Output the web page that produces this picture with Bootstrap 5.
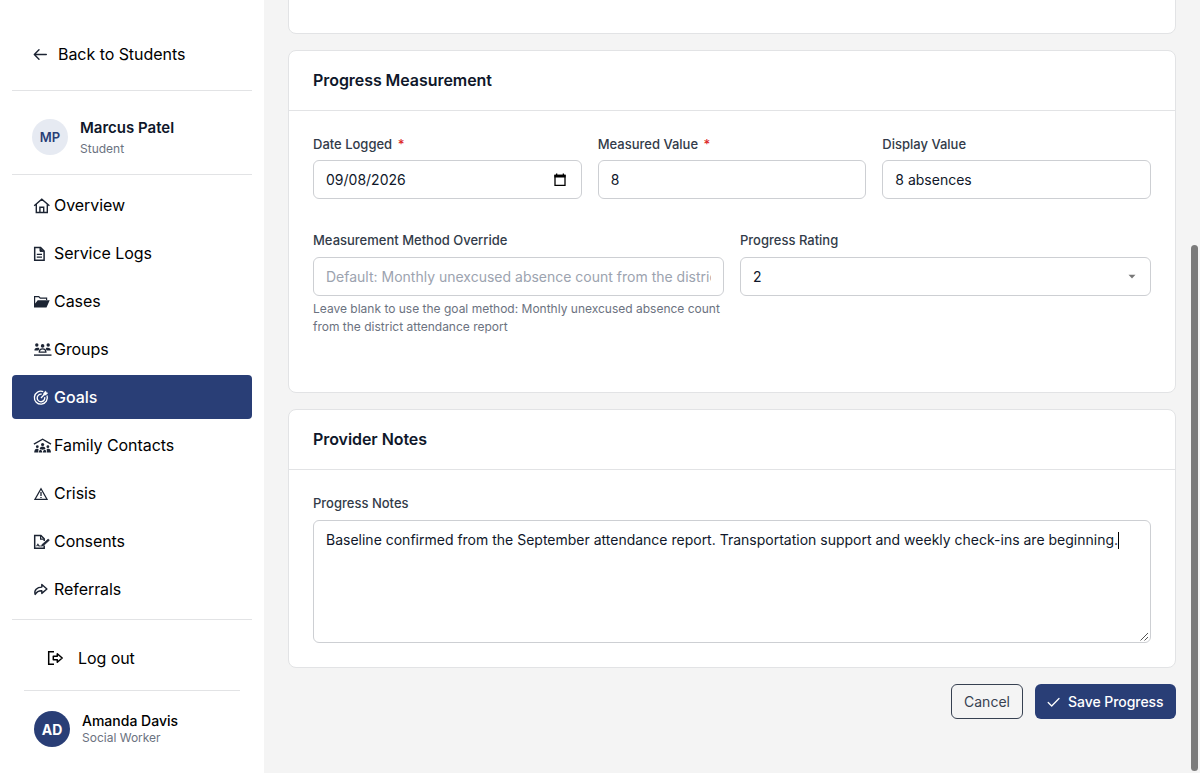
<!DOCTYPE html>
<html lang="en">
<head>
<meta charset="utf-8">
<meta name="viewport" content="width=device-width, initial-scale=1">
<title>Log Progress</title>
<link href="https://cdn.jsdelivr.net/npm/bootstrap@5.3.0/dist/css/bootstrap.min.css" rel="stylesheet">
<style>
:root{--navy:#293e76;--line:#e2e3e5;--ink:#0f172a;--slate:#6b7280}
body{font-family:Inter,sans-serif;font-size:14px;color:#000;background:#f4f4f4;height:100vh;overflow:hidden}
.side-panel{width:264px;background:#fff;padding:0 12px}
.back-link{height:91px;padding:18px 0 0 20px;border-bottom:1px solid var(--line);font-size:16px;letter-spacing:-.05px;gap:10px}
.student{height:84px;padding:9px 0 0 20px;gap:12px;border-bottom:1px solid var(--line)}
.student-name{font-size:15px;line-height:24px;color:var(--ink)}
.avatar{width:36px;height:36px;border-radius:50%;font-weight:600;font-size:13px;padding-top:1px;background:#e6eaf2;color:var(--navy)}
.avatar.solid{background:var(--navy);color:#fff;font-size:14px;font-weight:700}
.sub{font-size:12px;line-height:18px;color:var(--slate)}
.side-nav{padding:8px 0;gap:4px;border-bottom:1px solid var(--line);height:445px;flex-wrap:nowrap}
.side-nav .nav-link{height:44px;padding:0 0 0 20px;font-size:16px;letter-spacing:-.06px;color:#000;border-radius:4px;display:flex;align-items:center}
.side-nav .nav-link svg{width:22px;height:18px;flex:none;color:#1c2433;margin-top:1px}
.side-nav .nav-link.active{background:var(--navy);color:#fff;font-weight:500}
.side-nav .nav-link.active svg{color:#fff}
.logout{height:71px;margin:0 12px;padding:6px 0 0 22px;border-bottom:1px solid var(--line);font-size:16px;letter-spacing:-.07px;gap:12px}
.account{padding:20px 0 0 22px;gap:12px}
.account-name{font-weight:500;line-height:20px}
.account .sub{line-height:14px}
main{padding:0 24px;margin-top:-26px}
.panel{border:1px solid var(--line);border-radius:8px;background:#fff;margin-bottom:16px}
.panel-top{height:60px;padding:0 24px;border-bottom:1px solid var(--line)}
.panel-top h2{font-size:16px;letter-spacing:-.06px;font-weight:600;color:var(--ink);margin:0}
.form-label{font-size:13px;font-weight:500;line-height:20px;color:#323b49;margin:0 0 6px;display:block}
.row-second .form-label{margin-bottom:7px}
.form-control{height:39px;border:1px solid #cdcfd3;border-radius:6px;padding:0 12px;font-size:14px;line-height:20px;color:var(--ink);background-color:#fff}
.form-control::placeholder{color:#9ca3af}
.req{color:#dc2626;margin-left:2px}
.hint{font-size:12px;line-height:18px;color:var(--slate);margin-top:4px}
.notes{height:123px;padding-top:9px;margin-top:7px;white-space:nowrap}
.caret{display:inline-block;width:1px;height:17px;background:#000;vertical-align:-4px}
.grip{right:1px;bottom:1px}
.btn{height:35px;border-radius:6px;font-size:14px;font-weight:500;padding:0 12px;letter-spacing:-.05px}
.btn-cancel{width:72px;border:1px solid #374151;color:#374151;font-weight:400;letter-spacing:0}
.btn-save{width:141px;background:var(--navy);color:#fff;border:0;gap:7px}
.scroll-thumb{right:2px;top:245px;width:7px;height:526px;border-radius:4px;background:#7b7b7b}
</style>
</head>
<body class="d-flex">
<aside class="side-panel vh-100 flex-shrink-0">
  <div class="back-link d-flex align-items-center">
    <svg width="16" height="16" viewBox="0 0 16 16" fill="none" stroke="#1c2433" stroke-width="1.4" stroke-linecap="round" stroke-linejoin="round"><path d="M14.3 8.500H2.500M7 3.800 2.300 8.500 7 13.200"/></svg>
    <span>Back to Students</span>
  </div>
  <div class="student d-flex align-items-center">
    <span class="avatar d-flex align-items-center justify-content-center">MP</span>
    <div><div class="student-name fw-semibold">Marcus Patel</div><div class="sub">Student</div></div>
  </div>
  <nav class="nav flex-column side-nav">
    <a class="nav-link"><svg viewBox="0 0 22 18" fill="none" stroke="currentColor" stroke-width="1.400"><path d="M2.200 8.800 9.800 2.200l7.600 6.600M4.300 7.300v8.200h11V7.300M7.900 15.500v-5.200h3.800v5.200"/></svg>Overview</a>
    <a class="nav-link"><svg viewBox="0 0 22 18" fill="none" stroke="currentColor" stroke-width="1.500"><path d="M2.700 2.500h5.900l3.500 3.500v9.200H2.700z"/><path d="M8 2.700v3.700h3.900" fill="currentColor" stroke-width="1"/><path d="M4.800 9.400H10M4.800 12.200H10" stroke-width="1.300"/></svg>Service Logs</a>
    <a class="nav-link"><svg viewBox="0 0 22 18" fill="currentColor"><path d="M2 3h5l1.500 1.600h6.700v2.500h-1.200V5.800H8L6.500 4.200H3.200v6.200L5.700 7.200h12L14.500 14.500H2z"/></svg>Cases</a>
    <a class="nav-link"><svg viewBox="0 0 22 18" fill="currentColor"><circle cx="4.800" cy="4" r="1.700"/><circle cx="10.600" cy="4.900" r="1.800"/><circle cx="16.200" cy="4" r="1.700"/><path d="M2.400 9.500c0-2.600 1.600-3.100 4.400-2.700l.6 1.200-1.200 1.500zM18.700 9.500c0-2.600-1.600-3.100-4.400-2.700l-.6 1.200 1.200 1.500z"/><path d="M7.300 11.100c0-2.700 1.200-3.200 3.300-3.200s3.300.5 3.300 3.200z" fill="none" stroke="currentColor" stroke-width="1.300"/><path d="M2 13.400h17.500v1.400H2z"/></svg>Groups</a>
    <a class="nav-link active"><svg viewBox="0 0 22 18" fill="none" stroke="currentColor" stroke-width="1.350"><path d="M11.200 2.600A6.500 6.500 0 1 0 15 6.500M9.700 5.200A3.800 3.800 0 1 0 12.700 8.200M9 8.900l3.300-3.300"/><path d="M11.700 6V3.900L13.700 2l.5 1.600 1.600.5-2 1.900z" fill="currentColor" stroke-width=".5"/></svg>Goals</a>
    <a class="nav-link"><svg viewBox="0 0 22 18" fill="currentColor"><path d="M1.900 7.200 10.600 2.200l8.400 5" fill="none" stroke="currentColor" stroke-width="1.400"/><circle cx="10.600" cy="7.500" r="1.600"/><circle cx="5.300" cy="9.700" r="1.400"/><circle cx="15.900" cy="9.700" r="1.400"/><path d="M7.700 12c.3-3.300 5.500-3.300 5.800 0l-2.900.8zM2.200 15.600c.1-3.400 1.500-4.500 4.300-3.600l-.3 3.600zM19 15.600c-.1-3.400-1.500-4.500-4.300-3.600l.3 3.600zM6.800 15.600c.1-3.600 3.100-4 3.500 0zM10.900 15.600c.4-4 3.400-3.600 3.500 0z"/></svg>Family Contacts</a>
    <a class="nav-link"><svg viewBox="0 0 22 18" fill="none" stroke="currentColor" stroke-width="1.300"><path d="M9 3.700 15 14.300H3z"/><path d="M9 7.100v4M9 11.900v1.200"/></svg>Crisis</a>
    <a class="nav-link"><svg viewBox="0 0 22 18" fill="none" stroke="currentColor" stroke-width="1.500"><path d="M12.200 12.400v2.900H2.700V2.500h6.200l3.300 3.300v2.300"/><path d="M8.600 2.600v3.600h3.300" stroke-width="1.200"/><path d="m4.600 13.200 1.300-2 1 1.800h1.800" stroke-width="1.100"/><path d="m10 11.600 6.200-5.600 1.200 1.300-6 5.400-2 .6z" fill="currentColor" stroke-width=".6"/></svg>Consents</a>
    <a class="nav-link"><svg viewBox="0 0 22 18" fill="none" stroke="currentColor" stroke-width="1.400" stroke-linejoin="round"><path d="M9.800 3.500 14.900 8l-5.100 4.400V9.800C6.700 9.700 4.700 10.700 3.200 13.500 1.700 9.200 5 6.100 9.800 6.100z"/></svg>Referrals</a>
  </nav>
  <div class="logout d-flex align-items-center">
    <svg width="20" height="18" viewBox="0 0 20 18" fill="none" stroke="#000" stroke-width="1.500"><path d="M8 2.700H2.700v12.600H8"/><path d="M7.300 7.300h4V4.700L16.200 9l-4.900 4.300v-2.600h-4z" stroke-linejoin="round"/></svg>
    <span>Log out</span>
  </div>
  <div class="account d-flex">
    <span class="avatar solid d-flex align-items-center justify-content-center">AD</span>
    <div><div class="account-name">Amanda Davis</div><div class="sub">Social Worker</div></div>
  </div>
</aside>
<main class="flex-grow-1">
  <section class="panel" style="height:60px"></section>
  <section class="panel" style="height:343px">
    <div class="panel-top d-flex align-items-center"><h2>Progress Measurement</h2></div>
    <div class="p-4 pt-0">
      <div class="row gx-3" style="padding-top:23px;margin-bottom:31px">
        <div class="col-4"><label class="form-label">Date Logged <span class="req">*</span></label>
          <div class="form-control d-flex align-items-center justify-content-between"><span>09/08/2026</span>
          <svg width="18" height="16" viewBox="0 0 18 16"><path d="M4 3.500h10v9.800H4z" fill="none" stroke="#000" stroke-width="1.300"/><path d="M3.400 2.700h11.200v2.800H3.400zM5 1.500h1.300v2H5zM11.700 1.500H13v2h-1.300z"/></svg></div></div>
        <div class="col-4"><label class="form-label">Measured Value <span class="req">*</span></label><input class="form-control" value="8"></div>
        <div class="col-4"><label class="form-label">Display Value</label><input class="form-control" value="8 absences"></div>
      </div>
      <div class="row gx-3 row-second">
        <div class="col-6"><label class="form-label">Measurement Method Override</label><input class="form-control" placeholder="Default: Monthly unexcused absence count from the district attendance report">
          <div class="hint">Leave blank to use the goal method: Monthly unexcused absence count from the district attendance report</div></div>
        <div class="col-6"><label class="form-label">Progress Rating</label>
          <div class="form-control d-flex align-items-center justify-content-between"><span>2</span><svg width="12" height="10" viewBox="0 0 12 10"><path d="M2.500 2.800h7L6 6.600z" fill="#777"/></svg></div></div>
      </div>
    </div>
  </section>
  <section class="panel" style="height:259px">
    <div class="panel-top d-flex align-items-center"><h2>Provider Notes</h2></div>
    <div class="px-4" style="padding-top:23px"><label class="form-label">Progress Notes</label>
      <div class="form-control notes position-relative">Baseline confirmed from the September attendance report. Transportation support and weekly check-ins are beginning.<span class="caret"></span>
      <svg class="grip position-absolute" width="9" height="9" viewBox="0 0 9 9" stroke="#555" stroke-width="1"><path d="M.5 8.500 8 1M4.500 8.500 8 5"/></svg></div></div>
  </section>
  <div class="d-flex justify-content-end" style="gap:12px">
    <button class="btn btn-cancel">Cancel</button>
    <button class="btn btn-save d-flex align-items-center text-nowrap"><svg width="14" height="14" viewBox="0 0 14 14" fill="none" stroke="#fff" stroke-width="1.300" stroke-linecap="round" stroke-linejoin="round" class="flex-shrink-0"><path d="M1.200 7.500 4.700 11l7.300-7.500"/></svg><span>Save Progress</span></button>
  </div>
</main>
<div class="scroll-thumb position-fixed"></div>
<script src="https://cdn.jsdelivr.net/npm/bootstrap@5.3.0/dist/js/bootstrap.bundle.min.js"></script>
</body>
</html>
